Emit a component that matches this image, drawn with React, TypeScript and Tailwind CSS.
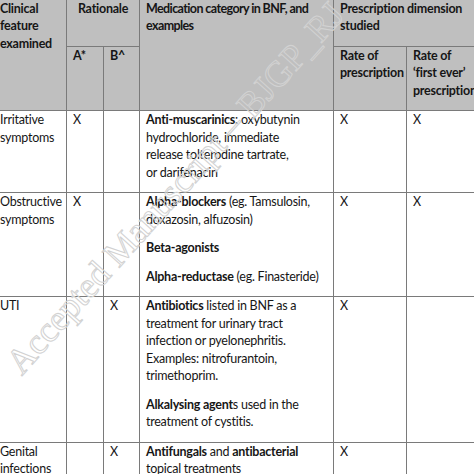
const cell = "border border-[#7a7a7a] align-top px-[6px] pt-0 pb-0 whitespace-nowrap overflow-hidden"

function P({ children }: { children: React.ReactNode }) {
  return <p className="mb-[11.2px]">{children}</p>
}

export default function App() {
  return (
    <div className="relative h-[474px] w-[474px] overflow-hidden bg-white font-['Lato','Liberation_Sans',sans-serif] text-[12.5px] leading-[17.4px] tracking-[-0.25px] text-[#161616]">
      <table className="-ml-[7px] -mt-[1px] w-[503px] table-fixed border-collapse">
        <colgroup>
          <col className="w-[73px]" />
          <col className="w-[37px]" />
          <col className="w-[36px]" />
          <col className="w-[194px]" />
          <col className="w-[73px]" />
          <col className="w-[90px]" />
        </colgroup>
        <thead className="bg-[#bfbfbf] font-bold">
          <tr>
            <th rowSpan={2} className={`${cell} w-[73px] text-left`}>
              <P>
                Clinical
                <br />
                feature
                <br />
                examined
              </P>
            </th>
            <th colSpan={2} className={`${cell} w-[73px] text-center`}>
              <P>Rationale</P>
            </th>
            <th rowSpan={2} className={`${cell} w-[194px] text-left tracking-[-0.6px]`}>
              <P>
                Medication category in BNF, and
                <br />
                examples
              </P>
            </th>
            <th colSpan={2} className={`${cell} w-[163px] text-left`}>
              <P>
                Prescription dimension
                <br />
                studied
              </P>
            </th>
          </tr>
          <tr>
            <th className={`${cell} w-[37px] text-left`}>
              <P>A*</P>
            </th>
            <th className={`${cell} w-[36px] text-left`}>
              <P>B^</P>
            </th>
            <th className={`${cell} w-[73px] text-left`}>
              <P>
                Rate of
                <br />
                prescription
              </P>
            </th>
            <th className={`${cell} w-[90px] text-left`}>
              <P>
                Rate of
                <br />
                ‘first ever’
                <br />
                prescription
              </P>
            </th>
          </tr>
        </thead>
        <tbody>
          <tr>
            <td className={cell}>
              <P>
                Irritative
                <br />
                symptoms
              </P>
            </td>
            <td className={cell}>
              <P>X</P>
            </td>
            <td className={cell}></td>
            <td className={cell}>
              <P>
                <b>Anti-muscarinics</b>: oxybutynin
                <br />
                hydrochloride, immediate
                <br />
                release tolterodine tartrate,
                <br />
                or darifenacin
              </P>
            </td>
            <td className={cell}>
              <P>X</P>
            </td>
            <td className={cell}>
              <P>X</P>
            </td>
          </tr>
          <tr>
            <td className={cell}>
              <P>
                Obstructive
                <br />
                symptoms
              </P>
            </td>
            <td className={cell}>
              <P>X</P>
            </td>
            <td className={cell}></td>
            <td className={cell}>
              <P>
                <b>Alpha-blockers</b> (eg. Tamsulosin,
                <br />
                doxazosin, alfuzosin)
              </P>
              <P>
                <b>Beta-agonists</b>
              </P>
              <P>
                <b>Alpha-reductase</b> (eg. Finasteride)
              </P>
            </td>
            <td className={cell}>
              <P>X</P>
            </td>
            <td className={cell}>
              <P>X</P>
            </td>
          </tr>
          <tr>
            <td className={cell}>
              <P>UTI</P>
            </td>
            <td className={cell}></td>
            <td className={cell}>
              <P>X</P>
            </td>
            <td className={cell}>
              <P>
                <b>Antibiotics</b> listed in BNF as a
                <br />
                treatment for urinary tract
                <br />
                infection or pyelonephritis.
                <br />
                Examples: nitrofurantoin,
                <br />
                trimethoprim.
              </P>
              <P>
                <b>Alkalysing agent</b>s used in the
                <br />
                treatment of cystitis.
              </P>
            </td>
            <td className={cell}>
              <P>X</P>
            </td>
            <td className={cell}></td>
          </tr>
          <tr>
            <td className={cell}>
              <P>
                Genital
                <br />
                infections
              </P>
            </td>
            <td className={cell}></td>
            <td className={cell}>
              <P>X</P>
            </td>
            <td className={cell}>
              <P>
                <b>Antifungals</b> and <b>antibacterial</b>
                <br />
                topical treatments
              </P>
            </td>
            <td className={cell}>
              <P>X</P>
            </td>
            <td className={cell}></td>
          </tr>
        </tbody>
      </table>

      <div className="pointer-events-none absolute left-[175px] top-[188px] -translate-x-1/2 -translate-y-1/2 -rotate-[48deg] whitespace-nowrap font-['Liberation_Serif',serif] text-[36px] leading-none tracking-normal text-transparent [-webkit-text-stroke:1px_#d2d2d2]">
        Accepted Manuscript – BJGP_RJ
      </div>
    </div>
  )
}
